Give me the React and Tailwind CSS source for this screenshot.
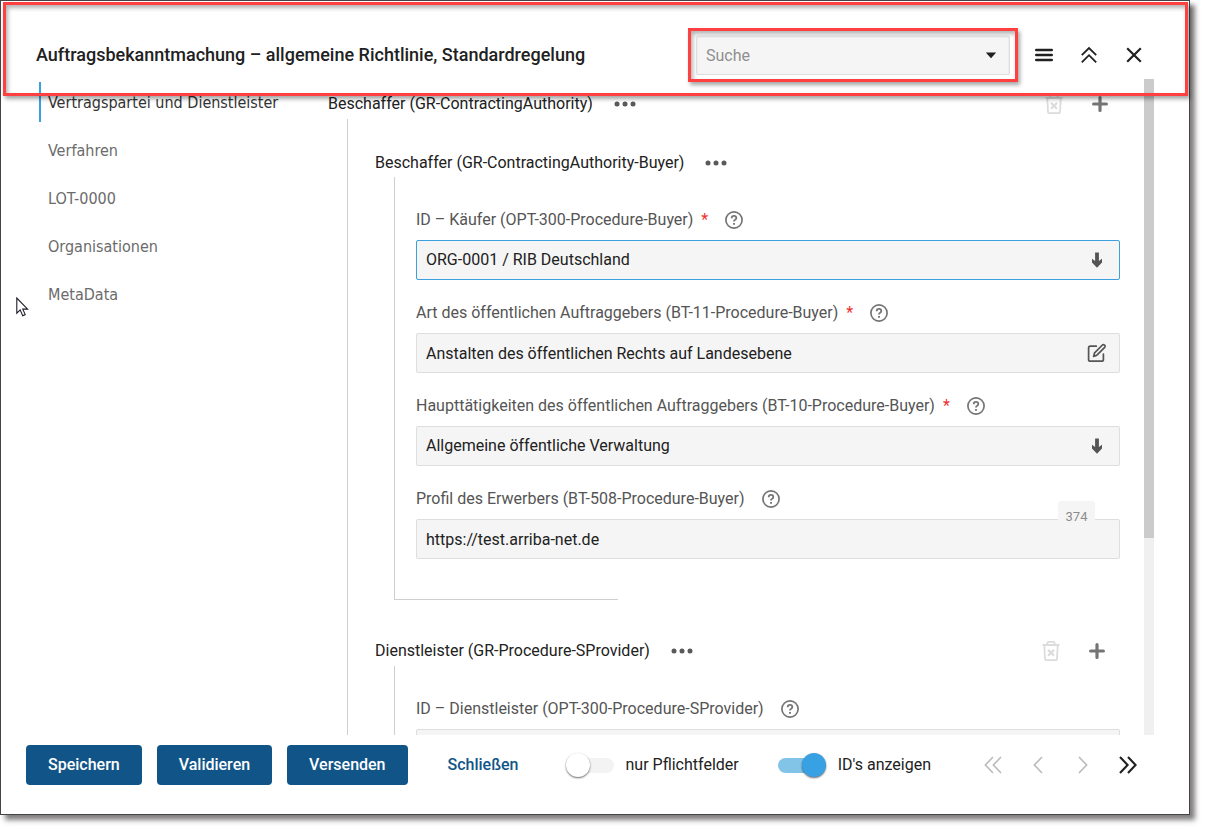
import React, { useState } from "react";

const NAV = ["Vertragspartei und Dienstleister", "Verfahren", "LOT-0000", "Organisationen", "MetaData"];

function Dots({ label }) {
  return (
    <button type="button" aria-label={label} className="flex h-6 w-6 items-center justify-center text-[#5a5a5a]">
      <svg width="22" height="6" viewBox="0 0 22 6" fill="currentColor">
        <circle cx="3" cy="3" r="2.5" />
        <circle cx="11" cy="3" r="2.5" />
        <circle cx="19" cy="3" r="2.5" />
      </svg>
    </button>
  );
}

function RowActions() {
  return (
    <div className="ml-auto flex items-center gap-[22px]">
      <button type="button" disabled aria-label="Löschen" className="flex h-6 w-6 items-center justify-center text-[#dcdcdc]">
        <svg width="18" height="20" viewBox="0 0 18 20" fill="none" stroke="currentColor" strokeWidth="1.8">
          <path d="M0.5 4H17.5M5.3 3.6V2.4Q5.3 0.9 6.8 0.9H11.2Q12.7 0.9 12.7 2.4V3.6M2.3 4.5L3 18Q3.1 19.2 4.3 19.2H13.7Q14.9 19.2 15 18L15.7 4.5" />
          <path d="M6 8.9L12 14.7M12 8.9L6 14.7" strokeWidth="2.2" />
        </svg>
      </button>
      <button type="button" aria-label="Hinzufügen" className="flex h-6 w-6 items-center justify-center text-[#757575]">
        <svg width="16" height="16" viewBox="0 0 16 16" fill="none" stroke="currentColor" strokeWidth="3.2" strokeLinecap="round">
          <path d="M8 1.6V14.4M1.6 8H14.4" />
        </svg>
      </button>
    </div>
  );
}

function Help() {
  return (
    <button type="button" aria-label="Hilfe" className="ml-4 flex h-5 w-5 items-center justify-center text-[#757575]">
      <svg width="18" height="18" viewBox="0 0 18 18" fill="none" stroke="currentColor" strokeWidth="1.7">
        <circle cx="9" cy="9" r="8.1" />
        <path d="M6.7 7.2Q6.7 4.9 9 4.9Q11.3 4.9 11.3 7Q11.3 8.1 10.1 8.8Q9 9.4 9 10.6" strokeWidth="1.8" />
        <path d="M9 11.9V13.7" strokeWidth="1.9" />
      </svg>
    </button>
  );
}

function DownArrow() {
  return (
    <svg width="12" height="16" viewBox="0 0 12 16" className="pointer-events-none text-[#555]" fill="currentColor">
      <path d="M4.1 0.4H7.9V9L11 6.8V10.6L6 15.8L1 10.6V6.8L4.1 9Z" />
    </svg>
  );
}

function EditIcon() {
  return (
    <svg width="20" height="20" viewBox="0 0 20 20" fill="none" stroke="#555" strokeWidth="1.7" strokeLinejoin="round" strokeLinecap="round">
      <path d="M9.3 3.2H3.4Q1.6 3.2 1.6 5V16.4Q1.6 18.2 3.4 18.2H14.6Q16.4 18.2 16.4 16.4V11.2" />
      <path d="M6.6 13.4L7.6 9.8L15.4 2Q16.4 1.1 17.5 2.1Q18.6 3.3 17.7 4.3L9.9 12.2Z" />
    </svg>
  );
}

function Field({ id, label, required, value, kind, active, counter }) {
  return (
    <div className="flex flex-col gap-2">
      <div className="flex h-6 items-center text-[#555]">
        <label htmlFor={id}>
          {label}
          {required && <span className="ml-1 text-[#f03030]"> *</span>}
        </label>
        <Help />
      </div>
      <div
        className={
          active
            ? "relative flex h-10 items-center rounded-[2px] border border-[#3aa0e0] bg-[#f5f5f5]"
            : "relative flex h-10 items-center rounded-[2px] border border-[#dedede] bg-[#f5f5f5]"
        }
      >
        {kind === "select" ? (
          <>
            <select id={id} className="h-full min-w-0 flex-1 appearance-none bg-transparent px-[9px] text-[#212121] outline-none">
              <option>{value}</option>
            </select>
            <span className="pointer-events-none absolute right-4 flex items-center">
              <DownArrow />
            </span>
          </>
        ) : (
          <input id={id} defaultValue={value} className="h-full min-w-0 flex-1 bg-transparent px-[9px] text-[#212121] outline-none" />
        )}
        {kind === "edit" && (
          <button type="button" aria-label="Bearbeiten" className="mr-3">
            <EditIcon />
          </button>
        )}
        {counter && (
          <span className="absolute -top-[19px] right-6 flex h-8 w-[37px] items-center justify-center rounded-[3px] bg-[#f5f5f5] text-[13px] text-[#8c8c8c]">
            {counter}
          </span>
        )}
      </div>
    </div>
  );
}

function Toggle({ id, label, initial }) {
  const [on, setOn] = useState(initial);
  return (
    <label htmlFor={id} className="flex cursor-pointer items-center gap-3">
      <span className="relative flex h-6 w-12 items-center">
        <input id={id} type="checkbox" role="switch" checked={on} onChange={(e) => setOn(e.target.checked)} className="peer sr-only" />
        <span className="h-[15px] w-full rounded-full bg-[#f3f3f3] peer-checked:bg-[#82c4e8]" />
        <span className="absolute left-0 h-6 w-6 rounded-full bg-white shadow-[0_1px_2px_rgba(0,0,0,0.6)] peer-checked:right-0 peer-checked:left-auto peer-checked:bg-[#38a1e4]" />
      </span>
      {label}
    </label>
  );
}

function Chevron({ d, label, disabled, w }) {
  return (
    <button
      type="button"
      aria-label={label}
      disabled={disabled}
      className="flex h-8 w-8 items-center justify-center text-[#212121] disabled:text-[#bdbdbd]"
    >
      <svg width={w} height="18" viewBox={`0 0 ${w} 18`} fill="none" stroke="currentColor" strokeWidth={disabled ? 1.7 : 2.1}>
        <path d={d} />
      </svg>
    </button>
  );
}

export default function App() {
  return (
    <div className="h-screen min-h-[600px] bg-white pr-[15px] pb-[15px] font-['Roboto',sans-serif] text-base leading-6 text-[#212121]">
      <div className="relative flex h-full flex-col border border-[#444] bg-white shadow-[5px_5px_5px_0px_rgba(60,55,58,0.65)]">
        <header className="flex h-[78px] shrink-0 items-center pt-[30px] pr-[45px] pl-[35px]">
          <h1 className="text-[18px] font-medium">Auftragsbekanntmachung – allgemeine Richtlinie, Standardregelung</h1>
          <div className="relative ml-auto flex h-[54px] w-[330px] items-center border-[3px] border-[#ff4040] px-[5px] shadow-[2px_3px_4px_rgba(0,0,0,0.35),inset_2px_3px_4px_rgba(0,0,0,0.3)]">
            <div className="flex h-10 w-full items-center rounded-[2px] border border-[#dedede] bg-[#f5f5f5] shadow-[inset_0_1px_2px_rgba(0,0,0,0.12)]">
              <input aria-label="Suche" placeholder="Suche" className="h-full min-w-0 flex-1 bg-transparent px-[9px] outline-none placeholder:text-[#8f8f8f]" />
              <button type="button" aria-label="Liste öffnen" className="mr-3">
                <svg width="12" height="7" viewBox="0 0 12 7" fill="#212121">
                  <path d="M0.8 0.6H11.2L6 6.2Z" />
                </svg>
              </button>
            </div>
          </div>
          <div className="ml-4 flex items-center gap-[25px]">
            <button type="button" aria-label="Menü" className="flex h-5 w-5 items-center justify-center">
              <svg width="18" height="14" viewBox="0 0 18 14" stroke="#212121" strokeWidth="2.4" strokeLinecap="round">
                <path d="M1.2 2H16.8M1.2 7H16.8M1.2 12H16.8" />
              </svg>
            </button>
            <button type="button" aria-label="Alle einklappen" className="flex h-5 w-5 items-center justify-center">
              <svg width="18" height="18" viewBox="0 0 18 18" fill="none" stroke="#212121" strokeWidth="1.8">
                <path d="M1.8 9.2L9 2L16.2 9.2M1.8 16.4L9 9.2L16.2 16.4" />
              </svg>
            </button>
            <button type="button" aria-label="Schließen" className="flex h-5 w-5 items-center justify-center">
              <svg width="16" height="16" viewBox="0 0 16 16" stroke="#212121" strokeWidth="2.2">
                <path d="M1.2 1.2L14.8 14.8M14.8 1.2L1.2 14.8" />
              </svg>
            </button>
          </div>
        </header>

        <div className="flex min-h-0 flex-1 pr-[35px]">
          <nav className="flex w-[327px] shrink-0 flex-col gap-2 pt-[3px] pl-[38px] font-['DejaVu_Sans_Condensed','DejaVu_Sans',sans-serif] text-base text-[#6b6b6b]">
            {NAV.map((item, i) => (
              <a
                key={item}
                href={`#section-${i}`}
                className={
                  i === 0
                    ? "flex h-10 items-center border-l-2 border-[#38a1e4] pt-0.5 pl-[7px] text-[#333]"
                    : "flex h-10 items-center border-l-2 border-transparent pt-0.5 pl-[7px]"
                }
              >
                {item}
              </a>
            ))}
          </nav>

          <main className="min-w-0 flex-1 overflow-hidden pt-[10px] pr-2">
            <div className="flex h-[30px] items-center gap-5">
              <h2>Beschaffer (GR-ContractingAuthority)</h2>
              <Dots label="Weitere Optionen Beschaffer" />
              <div className="ml-auto pr-6">
                <RowActions />
              </div>
            </div>
            <div className="ml-[19px] border-l border-[#cfcfcf] pt-[30px] pr-4 pl-[27px]">
              <section>
                <div className="flex h-7 items-center gap-5">
                  <h3>Beschaffer (GR-ContractingAuthority-Buyer)</h3>
                  <Dots label="Weitere Optionen Buyer" />
                </div>
                <div className="ml-[19px] border-l border-[#cfcfcf] pt-[31px] pl-[21px]">
                  <div className="flex flex-col gap-[21px] pb-10">
                    <Field id="kaeufer" label="ID – Käufer (OPT-300-Procedure-Buyer)" required kind="select" value="ORG-0001 / RIB Deutschland" active />
                    <Field id="art" label="Art des öffentlichen Auftraggebers (BT-11-Procedure-Buyer)" required kind="edit" value="Anstalten des öffentlichen Rechts auf Landesebene" />
                    <Field id="taetigkeit" label="Haupttätigkeiten des öffentlichen Auftraggebers (BT-10-Procedure-Buyer)" required kind="select" value="Allgemeine öffentliche Verwaltung" />
                    <Field id="profil" label="Profil des Erwerbers (BT-508-Procedure-Buyer)" kind="text" value="https://test.arriba-net.de" counter="374" />
                  </div>
                </div>
                <div className="ml-[19px] h-px w-56 bg-[#cfcfcf]" />
              </section>
              <section className="pt-9">
                <div className="flex h-[30px] items-center gap-5">
                  <h3>Dienstleister (GR-Procedure-SProvider)</h3>
                  <Dots label="Weitere Optionen Dienstleister" />
                  <div className="ml-auto pr-[11px]">
                    <RowActions />
                  </div>
                </div>
                <div className="ml-[19px] border-l border-[#cfcfcf] pt-[31px] pb-10 pl-[21px]">
                  <Field id="dienstleister" label="ID – Dienstleister (OPT-300-Procedure-SProvider)" kind="select" value="" />
                </div>
              </section>
            </div>
          </main>

          <div className="w-[10px] shrink-0 bg-[#f0f0f0]">
            <div className="h-[70%] bg-[#cbcbcb]" />
          </div>
        </div>

        <footer className="flex h-[79px] shrink-0 items-center pr-[45px] pb-[19px] pl-[25px]">
          <div className="flex gap-[15px]">
            <button type="button" className="h-10 rounded bg-[#115588] px-[22px] font-medium text-white">Speichern</button>
            <button type="button" className="h-10 rounded bg-[#115588] px-[22px] font-medium text-white">Validieren</button>
            <button type="button" className="h-10 rounded bg-[#115588] px-[22px] font-medium text-white">Versenden</button>
          </div>
          <button type="button" className="ml-10 font-medium text-[#115588]">Schließen</button>
          <div className="ml-[47px] flex gap-[39px]">
            <Toggle id="pflicht" label="nur Pflichtfelder" initial={false} />
            <Toggle id="ids" label="ID's anzeigen" initial={true} />
          </div>
          <div className="ml-auto flex gap-[13px]">
            <Chevron label="Erste Seite" disabled w={18} d="M9 1L1.4 9L9 17M17 1L9.4 9L17 17" />
            <Chevron label="Vorherige Seite" disabled w={10} d="M9 1L1.4 9L9 17" />
            <Chevron label="Nächste Seite" disabled w={10} d="M1 1L8.6 9L1 17" />
            <Chevron label="Letzte Seite" w={18} d="M1 1L8.6 9L1 17M9 1L16.6 9L9 17" />
          </div>
        </footer>

        <div className="pointer-events-none absolute top-px right-px left-[2px] h-[94px] border-[3px] border-[#ff4040] shadow-[2px_3px_4px_rgba(0,0,0,0.35),inset_2px_3px_4px_rgba(0,0,0,0.3)]" />
        <svg className="pointer-events-none absolute top-[296px] left-[15px]" width="13" height="20" viewBox="0 0 13 20" fill="#fff" stroke="#1b1b2b" strokeWidth="1.1">
          <path d="M0.8 1V16.2L4.2 12.9L6.7 18.7L9.2 17.6L6.8 12.1H11.6Z" />
        </svg>
      </div>
    </div>
  );
}
